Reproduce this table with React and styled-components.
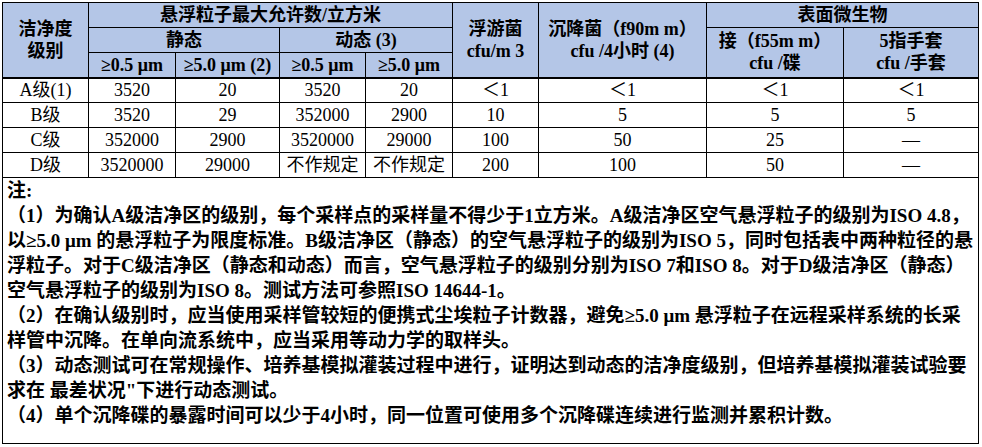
import React from "react";
import styled, { createGlobalStyle } from "styled-components";

const GlobalStyle = createGlobalStyle`
  html, body {
    margin: 0;
    padding: 0;
    background: #ffffff;
  }
`;

const Page = styled.div`
  padding: 2px 0 0 2px;
  font-family: "Liberation Serif", "Noto Sans CJK SC", serif;
  color: #000;
`;

const Table = styled.table`
  table-layout: fixed;
  border-collapse: collapse;
  width: 976px;
`;

const HeadRow = styled.tr`
  height: 25px;
`;

const Head = styled.th`
  background: #b4c6e7;
  border: 1px solid #000;
  border-bottom-width: ${(p) => (p.$thick ? "2px" : "1px")};
  font-size: 18px;
  font-weight: bold;
  line-height: 22px;
  padding: 0;
  text-align: center;
  vertical-align: middle;
  white-space: nowrap;
`;

const Row = styled.tr`
  height: 25px;
`;

const Cell = styled.td`
  border: 1px solid #000;
  font-size: 18px;
  line-height: 22px;
  padding: 0;
  text-align: center;
  vertical-align: middle;
  white-space: nowrap;
`;

const NoteCell = styled.td`
  border: 1px solid #000;
  height: 265px;
  padding: 0 0 0 4px;
  vertical-align: top;
  font-weight: bold;
  font-size: 19px;
`;

const NoteLine = styled.div`
  height: 25px;
  line-height: 25px;
  white-space: nowrap;
  letter-spacing: ${(p) => p.$ls || "0px"};
`;

const widths = [86, 87, 104, 86, 87, 86, 168, 137, 135];

const rows = [
  ["A级(1)", "3520", "20", "3520", "20", "＜1", "＜1", "＜1", "＜1"],
  ["B级", "3520", "29", "352000", "2900", "10", "5", "5", "5"],
  ["C级", "352000", "2900", "3520000", "29000", "100", "50", "25", "—"],
  ["D级", "3520000", "29000", "不作规定", "不作规定", "200", "100", "50", "—"],
];

const notes = [
  "注:",
  "（1）为确认A级洁净区的级别，每个采样点的采样量不得少于1立方米。A级洁净区空气悬浮粒子的级别为ISO 4.8，",
  "以≥5.0 μm 的悬浮粒子为限度标准。B级洁净区（静态）的空气悬浮粒子的级别为ISO 5，同时包括表中两种粒径的悬",
  "浮粒子。对于C级洁净区（静态和动态）而言，空气悬浮粒子的级别分别为ISO 7和ISO 8。对于D级洁净区（静态）",
  "空气悬浮粒子的级别为ISO 8。测试方法可参照ISO 14644-1。",
  "（2）在确认级别时，应当使用采样管较短的便携式尘埃粒子计数器，避免≥5.0 μm 悬浮粒子在远程采样系统的长采",
  "样管中沉降。在单向流系统中，应当采用等动力学的取样头。",
  "（3）动态测试可在常规操作、培养基模拟灌装过程中进行，证明达到动态的洁净度级别，但培养基模拟灌装试验要",
  "求在 最差状况\"下进行动态测试。",
  "（4）单个沉降碟的暴露时间可以少于4小时，同一位置可使用多个沉降碟连续进行监测并累积计数。",
];

export default function App() {
  return (
    <Page>
      <GlobalStyle />
      <Table>
        <colgroup>
          {widths.map((w, i) => (
            <col key={i} style={{ width: w }} />
          ))}
        </colgroup>
        <thead>
          <HeadRow>
            <Head rowSpan={3} $thick>
              洁净度
              <br />
              级别
            </Head>
            <Head colSpan={4}>悬浮粒子最大允许数/立方米</Head>
            <Head rowSpan={3} $thick>
              浮游菌
              <br />
              cfu/m 3
            </Head>
            <Head rowSpan={3} $thick>
              沉降菌（f90m m）
              <br />
              cfu /4小时 (4)
            </Head>
            <Head colSpan={2}>表面微生物</Head>
          </HeadRow>
          <HeadRow>
            <Head colSpan={2}>静态</Head>
            <Head colSpan={2}>动态 (3)</Head>
            <Head rowSpan={2} $thick>
              接（f55m m）
              <br />
              cfu /碟
            </Head>
            <Head rowSpan={2} $thick>
              5指手套
              <br />
              cfu /手套
            </Head>
          </HeadRow>
          <HeadRow>
            <Head $thick>≥0.5 μm</Head>
            <Head $thick>≥5.0 μm (2)</Head>
            <Head $thick>≥0.5 μm</Head>
            <Head $thick>≥5.0 μm</Head>
          </HeadRow>
        </thead>
        <tbody>
          {rows.map((r, i) => (
            <Row key={i}>
              {r.map((c, j) => (
                <Cell key={j}>{c}</Cell>
              ))}
            </Row>
          ))}
          <tr>
            <NoteCell colSpan={9}>
              {notes.map((n, i) => (
                <NoteLine key={i}>{n}</NoteLine>
              ))}
            </NoteCell>
          </tr>
        </tbody>
      </Table>
    </Page>
  );
}
